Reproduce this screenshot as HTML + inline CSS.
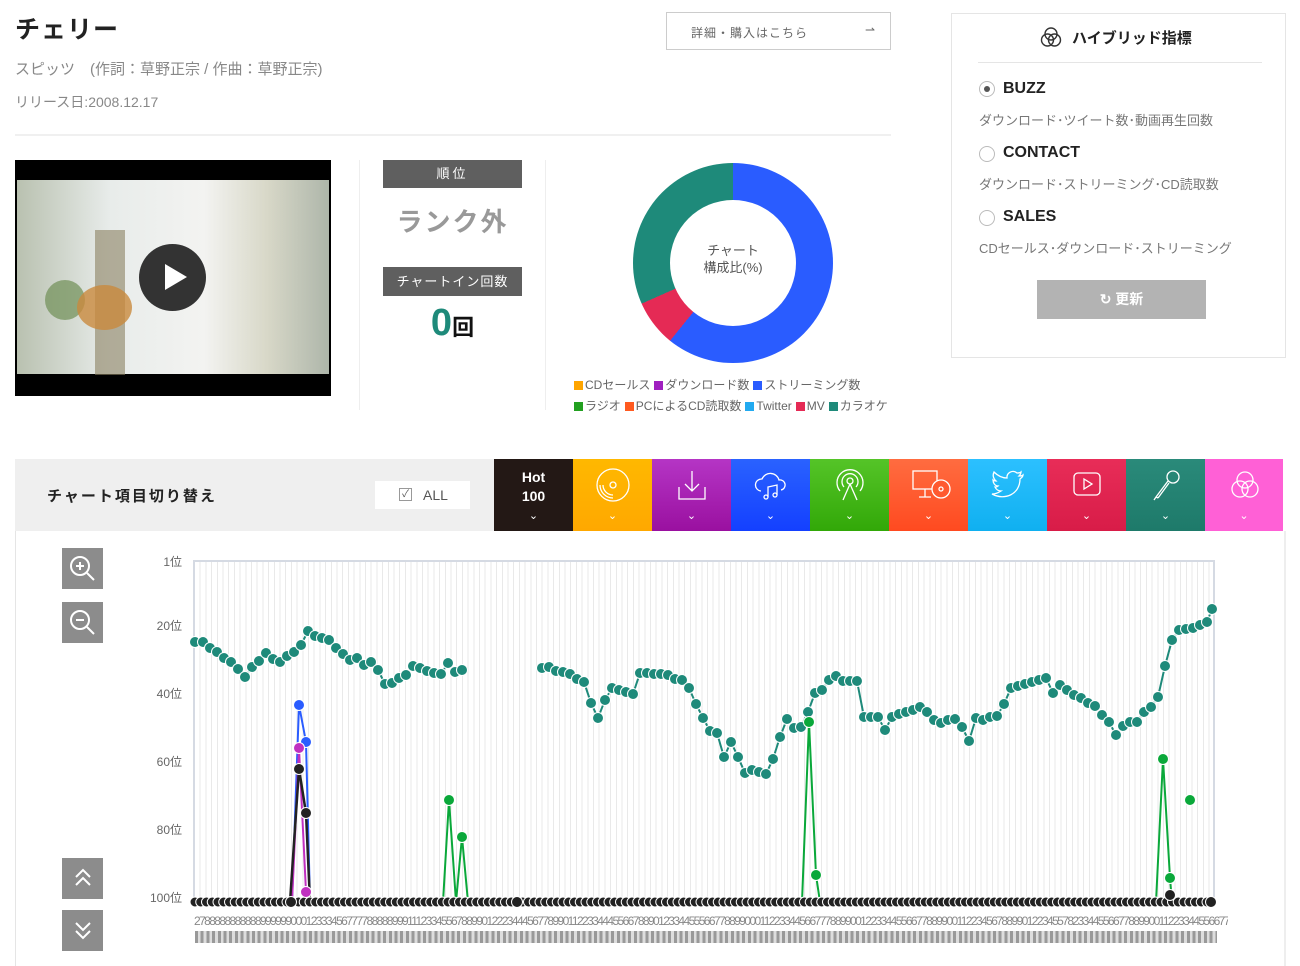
<!DOCTYPE html>
<html><head><meta charset="utf-8"><style>
*{box-sizing:border-box;margin:0;padding:0}
body{width:1300px;height:966px;overflow:hidden;background:#fff;font-family:"Liberation Sans","Noto Sans CJK JP",sans-serif;color:#333;position:relative}
.a{position:absolute}
.tab{position:absolute;top:459px;width:79px;height:72px;color:#fff;text-align:center}
.tab svg{position:absolute;left:22px;top:8px}
.tab .ch{position:absolute;left:0;right:0;top:50px;font-size:11px}
.zb{position:absolute;left:62px;width:41px;height:41px;background:#8c8c8c}
.leg span{display:inline-block;width:9px;height:9px;margin:0 2px 0 4px;vertical-align:-1px}
.yl{position:absolute;left:130px;width:52px;text-align:right;font-size:12px;color:#666;line-height:14px}
</style></head><body>
<div class="a" style="left:15px;top:10px;font-size:25px;font-weight:bold;color:#222;letter-spacing:1px">チェリー</div>
<div class="a" style="left:15px;top:58px;font-size:15px;color:#888">スピッツ　(作詞：草野正宗 / 作曲：草野正宗)</div>
<div class="a" style="left:15px;top:92px;font-size:14px;color:#888">リリース日:2008.12.17</div>
<div class="a" style="left:15px;top:134px;width:876px;height:2px;background:#f0f0f0"></div>
<div class="a" style="left:666px;top:12px;width:225px;height:38px;border:1px solid #ccc;font-size:12px;color:#666;padding:11px 0 0 24px;letter-spacing:1px">詳細・購入はこちら<span style="position:absolute;right:14px;top:10px">⇀</span></div>

<div class="a" style="left:15px;top:160px;width:316px;height:236px;background:#000;overflow:hidden">
<div class="a" style="left:2px;top:20px;width:312px;height:194px;background:linear-gradient(90deg,#b9c1b0,#e8ecea 30%,#f3f3f1 60%,#d8d8c8 80%,#aeb6aa)"></div>
<div class="a" style="left:30px;top:120px;width:40px;height:40px;border-radius:50%;background:#6f8f55;opacity:.7"></div>
<div class="a" style="left:80px;top:70px;width:30px;height:145px;background:#8a8060;opacity:.6"></div>
<div class="a" style="left:62px;top:125px;width:55px;height:45px;border-radius:50%;background:#c98a3d;opacity:.8"></div>
<div class="a" style="left:124px;top:84px;width:67px;height:67px;border-radius:50%;background:#333"></div>
<div class="a" style="left:150px;top:104px;width:0;height:0;border-left:22px solid #fff;border-top:13px solid transparent;border-bottom:13px solid transparent"></div>
</div>
<div class="a" style="left:359px;top:160px;width:1px;height:250px;background:#eee"></div>
<div class="a" style="left:545px;top:160px;width:1px;height:250px;background:#eee"></div>
<div class="a" style="left:383px;top:160px;width:139px;height:28px;background:#5f5f5f;color:#fff;font-size:13px;text-align:center;line-height:28px;letter-spacing:3px">順位</div>
<div class="a" style="left:383px;top:202px;width:139px;text-align:center;font-size:26px;color:#999;font-weight:bold;letter-spacing:2px">ランク外</div>
<div class="a" style="left:383px;top:267px;width:139px;height:29px;background:#5f5f5f;color:#fff;font-size:13px;text-align:center;line-height:29px;letter-spacing:1px">チャートイン回数</div>
<div class="a" style="left:383px;top:302px;width:139px;text-align:center;color:#1e8a7a;font-weight:bold;font-size:38px">0<span style="color:#111;font-size:22px">回</span></div>

<div class="a" style="left:633px;top:163px;width:200px;height:200px;border-radius:50%;background:conic-gradient(#2a5cff 0 219deg,#e52a55 219deg 246deg,#1e8a7a 246deg 360deg)"></div>
<div class="a" style="left:670px;top:200px;width:126px;height:126px;border-radius:50%;background:#fff;text-align:center;font-size:13px;color:#555;padding-top:42px;line-height:17px">チャート<br>構成比(%)</div>
<div class="a leg" style="left:570px;top:375px;font-size:12px;color:#666;line-height:21px;white-space:nowrap">
<span style="background:#ffa500"></span>CDセールス<span style="background:#a020c0"></span>ダウンロード数<span style="background:#2a5cff"></span>ストリーミング数<br>
<span style="background:#22a020"></span>ラジオ<span style="background:#ff5a20"></span>PCによるCD読取数<span style="background:#22aaf0"></span>Twitter<span style="background:#e52a55"></span>MV<span style="background:#1e8a7a"></span>カラオケ</div>

<div class="a" style="left:951px;top:13px;width:335px;height:345px;border:1px solid #e5e5e5"></div>
<div class="a" style="left:1040px;top:26px;font-size:15px;font-weight:bold;color:#222"><svg width="22" height="22" viewBox="0 0 22 22" style="vertical-align:-5px;margin-right:10px" fill="none" stroke="#333" stroke-width="1.4"><circle cx="11" cy="8" r="6"/><circle cx="7.5" cy="14" r="6"/><circle cx="14.5" cy="14" r="6"/></svg>ハイブリッド指標</div>
<div class="a" style="left:978px;top:62px;width:284px;height:1px;background:#e5e5e5"></div>
<div class="a" style="left:979px;top:81px;width:16px;height:16px;border:1px solid #bbb;border-radius:50%"><div style="margin:4px;width:6px;height:6px;border-radius:50%;background:#555"></div></div>
<div class="a" style="left:1003px;top:80px;font-size:16px;font-weight:bold;color:#222">BUZZ</div>
<div class="a" style="left:979px;top:110px;font-size:13px;color:#777">ダウンロード･ツイート数･動画再生回数</div>
<div class="a" style="left:979px;top:146px;width:16px;height:16px;border:1px solid #bbb;border-radius:50%"></div>
<div class="a" style="left:1003px;top:144px;font-size:16px;font-weight:bold;color:#222">CONTACT</div>
<div class="a" style="left:979px;top:174px;font-size:13px;color:#777">ダウンロード･ストリーミング･CD読取数</div>
<div class="a" style="left:979px;top:210px;width:16px;height:16px;border:1px solid #bbb;border-radius:50%"></div>
<div class="a" style="left:1003px;top:208px;font-size:16px;font-weight:bold;color:#222">SALES</div>
<div class="a" style="left:979px;top:238px;font-size:13px;color:#777">CDセールス･ダウンロード･ストリーミング</div>
<div class="a" style="left:1037px;top:280px;width:169px;height:39px;background:#b3b3b3;color:#fff;font-size:14px;font-weight:bold;text-align:center;line-height:39px">↻ 更新</div>

<div class="a" style="left:15px;top:459px;width:1268px;height:72px;background:#efefef"></div>
<div class="a" style="left:47px;top:485px;font-size:15px;font-weight:bold;color:#222;letter-spacing:2px">チャート項目切り替え</div>
<div class="a" style="left:375px;top:481px;width:95px;height:28px;background:#fff;font-size:14px;color:#555;line-height:28px;padding-left:24px"><span style="position:absolute;left:24px;top:7px;width:13px;height:13px;border:1px solid #999;font-size:10px;line-height:11px;text-align:center">✓</span><span style="margin-left:24px">ALL</span></div>
<div class="tab" style="left:494px;background:#231815"><div style="font-size:14px;font-weight:bold;line-height:19px;padding-top:9px">Hot<br>100</div><div class="ch">⌄</div></div>
<div class="tab" style="left:573px;background:linear-gradient(#ffb800,#ffa800)"><svg width="36" height="36" viewBox="0 0 36 36" fill="none" stroke="#fff" stroke-width="1.3"><circle cx="18" cy="18" r="16"/><circle cx="18" cy="18" r="3"/><path d="M8 18a10 10 0 0 0 10 10M5 18a13 13 0 0 0 13 13"/></svg><div class="ch">⌄</div></div>
<div class="tab" style="left:652px;background:linear-gradient(#b535c5,#9a10a0)"><svg width="36" height="36" viewBox="0 0 36 36" fill="none" stroke="#fff" stroke-width="1.3"><path d="M18 4v20M11 17l7 7 7-7M5 20v12h26V20"/></svg><div class="ch">⌄</div></div>
<div class="tab" style="left:731px;background:linear-gradient(#2a62ff,#1440ff)"><svg width="36" height="36" viewBox="0 0 36 36" fill="none" stroke="#fff" stroke-width="1.3"><path d="M8 24a6 6 0 0 1 1-12 9 9 0 0 1 17 1 5 5 0 0 1 2 10"/><path d="M15 30V20l9-2v10"/><circle cx="13" cy="30" r="2"/><circle cx="22" cy="28" r="2"/></svg><div class="ch">⌄</div></div>
<div class="tab" style="left:810px;background:linear-gradient(#55c428,#32a808)"><svg width="36" height="36" viewBox="0 0 36 36" fill="none" stroke="#fff" stroke-width="1.3"><circle cx="18" cy="14" r="3"/><path d="M12 20a8 8 0 1 1 12 0M8 24a13 13 0 1 1 20 0M18 17l-7 16M18 17l7 16"/></svg><div class="ch">⌄</div></div>
<div class="tab" style="left:889px;background:linear-gradient(#ff6c40,#ff4a20)"><svg width="40" height="36" viewBox="0 0 40 36" fill="none" stroke="#fff" stroke-width="1.3"><rect x="2" y="4" width="24" height="18"/><path d="M14 22v8M8 30h12"/><circle cx="30" cy="22" r="9" fill="#ff5a30"/><circle cx="30" cy="22" r="2"/></svg><div class="ch">⌄</div></div>
<div class="tab" style="left:968px;background:linear-gradient(#2cc0ff,#10b0f0)"><svg width="36" height="36" viewBox="0 0 36 36" fill="none" stroke="#fff" stroke-width="1.3"><path d="M33 8c-1 1-3 1-4 1 1-1 2-2 2-4-1 1-3 1-4 1a6 6 0 0 0-10 5C11 11 7 8 4 5c-2 4 0 7 2 9-1 0-2 0-3-1 0 3 2 6 5 6-1 1-2 1-3 1 1 2 3 4 6 4-3 2-6 3-9 3 13 7 28 0 28-15 1-1 3-2 3-4z"/></svg><div class="ch">⌄</div></div>
<div class="tab" style="left:1047px;background:linear-gradient(#e82d58,#d81c48)"><svg width="36" height="36" viewBox="0 0 36 36" fill="none" stroke="#fff" stroke-width="1.3"><rect x="5" y="6" width="26" height="22" rx="4"/><path d="M15 12v10l8-5z"/></svg><div class="ch">⌄</div></div>
<div class="tab" style="left:1126px;background:linear-gradient(#2a8a7a,#1e7a6a)"><svg width="36" height="36" viewBox="0 0 36 36" fill="none" stroke="#fff" stroke-width="1.3"><circle cx="25" cy="10" r="6"/><path d="M20 14L8 30l-2 3M21 16L10 31M8 30l2 1"/></svg><div class="ch">⌄</div></div>
<div class="tab" style="left:1205px;width:78px;background:#ff60d6"><svg width="36" height="36" viewBox="0 0 36 36" fill="none" stroke="#fff" stroke-width="1.3"><circle cx="18" cy="13" r="8"/><circle cx="13" cy="22" r="8"/><circle cx="23" cy="22" r="8"/></svg><div class="ch">⌄</div></div>

<div class="a" style="left:15px;top:531px;width:1px;height:435px;background:#e5e5e5"></div>
<div class="a" style="left:1284px;top:531px;width:2px;height:435px;background:#eee"></div>
<div class="zb" style="top:548px"><svg width="41" height="41" fill="none" stroke="#fff" stroke-width="2"><circle cx="18" cy="18" r="9"/><path d="M25 25l7 7M14 18h8M18 14v8"/></svg></div>
<div class="zb" style="top:602px"><svg width="41" height="41" fill="none" stroke="#fff" stroke-width="2"><circle cx="18" cy="18" r="9"/><path d="M25 25l7 7M14 18h8"/></svg></div>
<div class="zb" style="top:858px"><svg width="41" height="41" fill="none" stroke="#fff" stroke-width="2"><path d="M14 19l7-7 7 7M14 27l7-7 7 7"/></svg></div>
<div class="zb" style="top:910px"><svg width="41" height="41" fill="none" stroke="#fff" stroke-width="2"><path d="M14 13l7 7 7-7M14 21l7 7 7-7"/></svg></div>

<div class="yl" style="top:555px">1位</div>
<div class="yl" style="top:619px">20位</div>
<div class="yl" style="top:687px">40位</div>
<div class="yl" style="top:755px">60位</div>
<div class="yl" style="top:823px">80位</div>
<div class="yl" style="top:891px">100位</div>
<div class="a" style="left:193px;top:560px;width:1022px;height:342px;border:2px solid #d5dae3;border-bottom:none;background:repeating-linear-gradient(90deg,transparent 0 4.7px,#e9e9e9 4.7px 5.7px)"></div>
<div class="a" style="left:194px;top:914px;width:1034px;font-size:12px;color:#888;letter-spacing:-1.6px;white-space:nowrap;overflow:hidden">27888888888889999990001233345677778888899911123345567889901222344456778990112233444556678890123344555667788990001122334456677788990012233445566778899001122345678899012234557823344556677889900112233445566778</div>
<div class="a" style="left:195px;top:931px;width:1022px;height:12px;background:repeating-linear-gradient(90deg,#999 0 3px,#ddd 3px 5.7px)"></div>
<svg class="a" style="left:0;top:0" width="1300" height="966" id="ch"></svg>
<script>
var t=[[195,642],[203,642],[210,648],[217,652],[224,658],[231,662],[238,669],[245,677],[252,667],[259,661],[266,653],[273,659],[280,662],[287,656],[294,652],[301,645],[308,631],[315,636],[322,638],[329,640],[336,648],[343,654],[350,660],[357,658],[364,665],[371,662],[378,670],[385,684],[392,683],[399,678],[406,675],[413,666],[420,668],[427,671],[434,673],[441,674],[448,663],[455,672],[462,670]];
var t2=[[542,668],[549,667],[556,671],[563,672],[570,674],[577,679],[584,682],[591,703],[598,718],[605,700],[612,688],[619,690],[626,692],[633,694],[640,673],[647,673],[654,674],[661,674],[668,675],[675,679],[682,680],[689,688],[696,704],[703,718],[710,731],[717,733],[724,757],[731,742],[738,757],[745,773],[752,770],[759,772],[766,774],[773,759],[780,737],[787,719],[794,728],[801,727],[808,712],[815,693],[822,690],[829,680],[836,676],[843,681],[850,681],[857,681],[864,717],[871,717],[878,717],[885,730],[892,717],[899,714],[906,712],[913,710],[920,707],[927,712],[934,720],[941,723],[948,720],[955,719],[962,727],[969,741],[976,718],[983,720],[990,717],[997,716],[1004,704],[1011,688],[1018,686],[1025,684],[1032,682],[1039,680],[1046,678],[1053,693],[1060,685],[1067,690],[1074,695],[1081,698],[1088,703],[1095,706],[1102,715],[1109,722],[1116,735],[1123,726],[1130,722],[1137,722],[1144,712],[1151,707],[1158,697],[1165,666],[1172,640],[1179,630],[1186,629],[1193,628],[1200,625],[1207,622],[1212,609]];
var s='';
function line(p,c,w){s+='<polyline fill="none" stroke="'+c+'" stroke-width="'+(w||2)+'" points="'+p.map(function(a){return a.join(',')}).join(' ')+'"/>';}
function dots(p,c,r){p.forEach(function(a){s+='<circle cx="'+a[0]+'" cy="'+a[1]+'" r="'+(r||5.5)+'" fill="'+c+'" stroke="#fff" stroke-width="1"/>';});}
line([[443,902],[449,800],[456,902],[462,837],[468,902]],'#0aa83a');
line([[802,902],[809,722],[816,875],[820,902]],'#0aa83a');
line([[1156,902],[1163,759],[1170,878],[1172,902]],'#0aa83a');
line([[292,902],[299,705],[306,742],[310,902]],'#2a5cff');
line([[292,902],[299,748],[306,892]],'#c030c0');
line([[290,902],[299,769],[306,813],[310,902]],'#222',2.5);
line(t,'#1e8a7a');line(t2,'#1e8a7a');
var b=[];for(var x=195;x<=1212;x+=5.75)b.push([x,902]);
dots(b,'#222',5);
dots(t,'#1e8a7a');dots(t2,'#1e8a7a');
dots([[449,800],[462,837],[809,722],[816,875],[1163,759],[1170,878],[1190,800]],'#0aa83a');
dots([[299,705],[306,742]],'#2a5cff');dots([[299,748],[306,892]],'#c030c0');
dots([[299,769],[306,813],[291,902],[517,902],[1170,895],[1211,902]],'#222');
document.getElementById('ch').innerHTML=s;
</script>
</body></html>
